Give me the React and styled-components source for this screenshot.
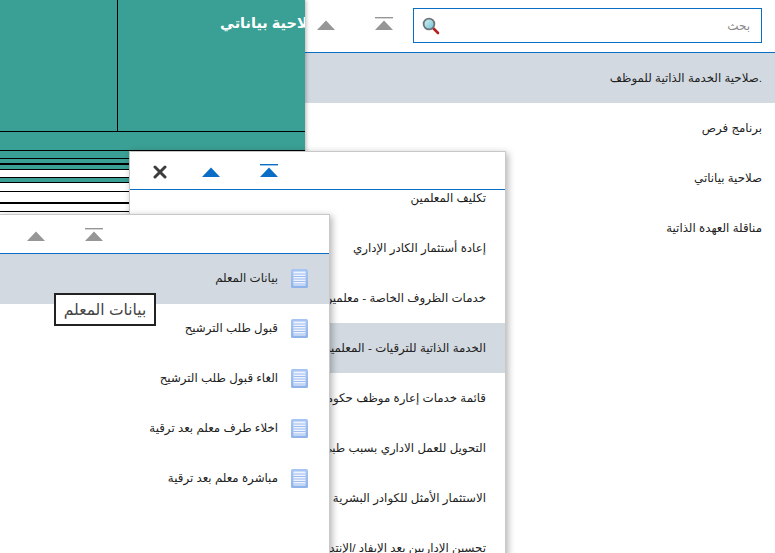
import styled, { createGlobalStyle } from 'styled-components';

const GlobalStyle = createGlobalStyle`
  html, body {
    margin: 0;
    padding: 0;
    background: #fff;
    overflow: hidden;
  }
  body {
    font-family: "Liberation Sans", "DejaVu Sans", "Noto Sans", sans-serif;
    font-size: 11.8px;
    color: #222;
  }
`;

const TEAL = '#3a9f94';
const BLUE = '#0a6ec7';
const ACTIVE = '#d2d9e0';

const Desktop = styled.div`
  position: relative;
  display: flex;
  width: 775px;
  height: 553px;
  overflow: hidden;
`;

const Sheet = styled.div`
  display: flex;
  flex-direction: column;
  flex: none;
  width: 305px;
  height: 100%;
  overflow: hidden;
  box-shadow: 1px 0 4px rgba(0, 0, 0, 0.3);
  position: relative;
  z-index: 1;
`;

const SheetHead = styled.div`
  display: flex;
  flex: none;
  height: 131px;
  background: ${TEAL};
  border-bottom: 1px solid #000;
`;

const SheetSide = styled.div`
  flex: none;
  width: 117px;
  border-right: 1px solid #000;
`;

const SheetTitle = styled.div`
  flex: 1;
  min-width: 0;
  display: flex;
  justify-content: flex-start;
  direction: rtl;
  overflow: hidden;
  padding-top: 15px;
  color: #fff;
  font-size: 14.5px;
  font-weight: bold;
  white-space: nowrap;

  span {
    margin-right: -17px;
  }
`;

const Stripe = styled.div`
  flex: none;
  height: ${(p) => p.$height}px;
  background: ${(p) => (p.$teal ? TEAL : '#fff')};
  border-bottom: ${(p) => p.$line}px solid #000;
`;

const MainPanel = styled.div`
  flex: 1;
  min-width: 0;
  background: #fff;
`;

const Toolbar = styled.div`
  display: flex;
  align-items: center;
  gap: 40px;
  height: ${(p) => p.$height}px;
  padding-left: ${(p) => p.$left}px;
  padding-bottom: ${(p) => p.$bottom || 0}px;
  box-sizing: border-box;
  border-bottom: 1px solid ${BLUE};
`;

const SearchBox = styled.label`
  display: flex;
  align-items: center;
  align-self: flex-start;
  box-sizing: border-box;
  width: 349px;
  height: 35px;
  margin: 8px 0 0 -20px;
  padding: 0 11px 0 8px;
  border: 1px solid ${BLUE};
`;

const SearchInput = styled.input`
  flex: 1;
  min-width: 0;
  border: 0;
  outline: 0;
  padding: 0;
  direction: rtl;
  background: transparent;
  font: inherit;
  font-size: 12px;

  &::placeholder {
    color: #8a8a8a;
    opacity: 1;
  }
`;

const Row = styled.div`
  display: flex;
  align-items: center;
  gap: 13px;
  direction: rtl;
  flex: none;
  height: 50px;
  box-sizing: border-box;
  padding-right: ${(p) => p.$right}px;
  padding-bottom: ${(p) => p.$lift || 0}px;
  background: ${(p) => (p.$active ? ACTIVE : 'transparent')};
  white-space: nowrap;
  overflow: hidden;
`;

const Popup = styled.div`
  position: absolute;
  left: ${(p) => p.$x}px;
  top: ${(p) => p.$y}px;
  width: ${(p) => p.$width}px;
  bottom: -4px;
  box-sizing: border-box;
  background: #fff;
  border: 1px solid #c8c8c8;
  box-shadow: 2px 2px 7px rgba(0, 0, 0, 0.3);
  z-index: ${(p) => p.$layer};
`;

const RowList = styled.div`
  overflow: hidden;
  height: 100%;
`;

const ScrolledRows = styled.div`
  margin-top: -17px;
`;

const Tooltip = styled.div`
  position: absolute;
  left: 54px;
  top: 78px;
  box-sizing: border-box;
  width: 102px;
  height: 33px;
  display: flex;
  align-items: center;
  justify-content: center;
  background: #fff;
  border: 2px solid #222;
  color: #444;
  font-size: 15.5px;
  direction: rtl;
  white-space: nowrap;
`;

const TopIcon = ({ color }) => (
  <svg width="18" height="13" viewBox="0 0 18 13">
    <rect x="0" y="0" width="18" height="1.4" fill={color} />
    <path d="M9 3.6 L18 13 H0 Z" fill={color} />
  </svg>
);

const UpIcon = ({ color }) => (
  <svg width="18" height="13" viewBox="0 0 18 13">
    <path d="M9 3.6 L18 13 H0 Z" fill={color} />
  </svg>
);

const CloseSvg = styled.svg`
  margin: 3px -5px 0 0;
`;

const CloseIcon = () => (
  <CloseSvg width="14" height="14" viewBox="0 0 14 14">
    <path d="M2 2 L12 12 M12 2 L2 12" stroke="#3d3d3d" strokeWidth="3" strokeLinecap="round" />
  </CloseSvg>
);

const SearchIcon = () => (
  <svg width="18" height="18" viewBox="0 0 18 18">
    <defs>
      <linearGradient id="lens" x1="0" y1="0" x2="1" y2="1">
        <stop offset="0" stopColor="#d8f3f8" />
        <stop offset="1" stopColor="#6cc0d2" />
      </linearGradient>
    </defs>
    <path d="M10.5 10.5 L16 16" stroke="#b3221f" strokeWidth="2.6" strokeLinecap="round" />
    <circle cx="7" cy="7" r="5.4" fill="url(#lens)" stroke="#6f7479" strokeWidth="1.8" />
  </svg>
);

const DocSvg = styled.svg`
  flex: none;
`;

const DocIcon = () => (
  <DocSvg width="17" height="19" viewBox="0 0 17 19">
    <defs>
      <linearGradient id="docEdge" x1="0" y1="0" x2="0" y2="1">
        <stop offset="0" stopColor="#a8c6f4" />
        <stop offset="1" stopColor="#8fb2ea" />
      </linearGradient>
    </defs>
    <rect x="0" y="0" width="17" height="19" rx="1.5" fill="url(#docEdge)" />
    <rect x="2.5" y="2.5" width="12" height="14" fill="#eef3fd" />
    <path d="M2.5 5 H14.5 M2.5 7.5 H14.5 M2.5 10 H14.5 M2.5 12.5 H14.5 M2.5 15 H14.5" stroke="#9dbcf0" strokeWidth="1" />
  </DocSvg>
);

const stripes = [
  [18, true, 1], [7, true, 1], [4, true, 2], [4, true, 1], [7, false, 1], [4, true, 1],
  [8, false, 1], [10, false, 2], [7, false, 1],
];

const mainRows = ['.صلاحية الخدمة الذاتية للموظف', 'برنامج فرص', 'صلاحية بياناتي', 'مناقلة العهدة الذاتية'];

const middleRows = [
  'تكليف المعلمين',
  'إعادة أستثمار الكادر الإداري',
  'خدمات الظروف الخاصة - معلمين',
  'الخدمة الذاتية للترقيات - المعلمين',
  'قائمة خدمات إعارة موظف حكومي',
  'التحويل للعمل الاداري بسبب طبي',
  'الاستثمار الأمثل للكوادر البشرية',
  'تحسين الإداريين بعد الإيفاد /الإنتداب',
];

const frontRows = [
  'بيانات المعلم',
  'قبول طلب الترشيح',
  'الغاء قبول طلب الترشيح',
  'اخلاء طرف معلم بعد ترقية',
  'مباشرة معلم بعد ترقية',
];

export default function App() {
  return (
    <Desktop>
      <GlobalStyle />
      <Sheet>
        <SheetHead>
          <SheetSide />
          <SheetTitle>
            <span>صلاحية بياناتي</span>
          </SheetTitle>
        </SheetHead>
        {stripes.map(([height, teal, line], i) => (
          <Stripe key={i} $height={height} $teal={teal} $line={line} />
        ))}
      </Sheet>

      <MainPanel>
        <Toolbar $height={53} $left={12} $bottom={5}>
          <UpIcon color="#969696" />
          <TopIcon color="#969696" />
          <SearchBox>
            <SearchIcon />
            <SearchInput placeholder="بحث" />
          </SearchBox>
        </Toolbar>
        {mainRows.map((label, i) => (
          <Row key={label} $right={13} $active={i === 0}>
            {label}
          </Row>
        ))}
      </MainPanel>

      <Popup $x={129} $y={151} $width={377} $layer={2}>
        <Toolbar $height={38} $left={23}>
          <CloseIcon />
          <UpIcon color={BLUE} />
          <TopIcon color={BLUE} />
        </Toolbar>
        <RowList>
          <ScrolledRows>
            {middleRows.map((label, i) => (
              <Row key={label} $right={19} $active={i === 3}>
                {label}
              </Row>
            ))}
          </ScrolledRows>
        </RowList>
      </Popup>

      <Popup $x={-1} $y={214} $width={331} $layer={3}>
        <Toolbar $height={39} $left={27}>
          <UpIcon color="#969696" />
          <TopIcon color="#969696" />
        </Toolbar>
        {frontRows.map((label, i) => (
          <Row key={label} $right={21} $lift={2} $active={i === 0}>
            <DocIcon />
            {label}
          </Row>
        ))}
        <Tooltip>بيانات المعلم</Tooltip>
      </Popup>
    </Desktop>
  );
}
